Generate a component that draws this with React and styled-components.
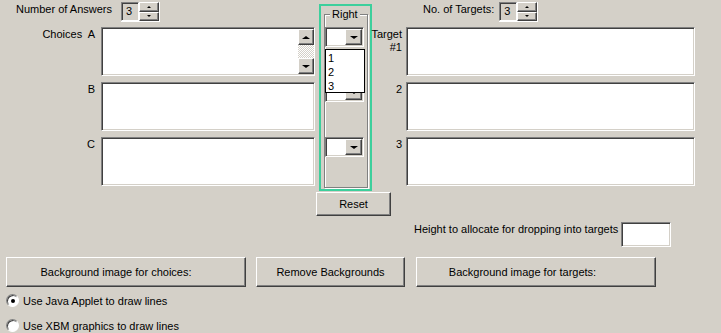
import React from 'react';
import styled, { createGlobalStyle } from 'styled-components';

const GlobalStyle = createGlobalStyle`
  html, body {
    margin: 0;
    padding: 0;
    background: #d4d0c8;
  }
  body {
    font-family: "Liberation Sans", Arial, sans-serif;
    font-size: 11px;
    color: #000;
  }
`;

const raised = `
  background: #d4d0c8;
  border: 1px solid;
  border-color: #fff #404040 #404040 #fff;
  box-shadow: inset -1px -1px #808080;
`;

const sunken = `
  border: 1px solid;
  border-color: #808080 #fff #fff #808080;
  box-shadow: inset 1px 1px #404040, inset -1px -1px #d4d0c8;
`;

const Page = styled.div`
  width: 721px;
  height: 333px;
  overflow: hidden;
  box-sizing: border-box;
`;

const Top = styled.div`
  display: flex;
  align-items: flex-start;
  height: 191px;
`;

const Column = styled.div`
  width: ${p => p.width}px;
  flex-shrink: 0;
  display: flex;
  flex-direction: column;
`;

const Header = styled.div`
  height: 22px;
  display: flex;
  align-items: flex-start;
  padding-left: ${p => p.indent}px;
  gap: ${p => p.gap}px;
  line-height: 13px;
`;

const HeaderText = styled.span`
  padding-top: 3px;
  white-space: nowrap;
`;

const Spinner = styled.div`
  display: flex;
  height: 19px;
  margin-top: 2px;
  border-right: 1px solid #fff;
  border-bottom: 1px solid #fff;
`;

const SpinValue = styled.div`
  ${sunken}
  box-sizing: border-box;
  width: 18px;
  padding: 2px 0 0 4px;
  line-height: 13px;
`;

const SpinButtons = styled.div`
  width: 20px;
  display: flex;
  flex-direction: column;
`;

const SpinBtn = styled.div`
  ${raised}
  flex: 1;
  display: flex;
  align-items: center;
  justify-content: center;
`;

const Tri = styled.span`
  width: 0;
  height: 0;
  border-left: ${p => p.size}px solid transparent;
  border-right: ${p => p.size}px solid transparent;
  ${p => (p.up ? 'border-bottom' : 'border-top')}: ${p => Math.ceil(p.size / 2) + 1}px solid #000;
`;

const Rows = styled.div`
  margin-top: 5px;
  display: flex;
  flex-direction: column;
  gap: 6px;
`;

const Row = styled.div`
  display: flex;
  height: 49px;
`;

const Label = styled.div`
  width: ${p => p.width}px;
  flex-shrink: 0;
  box-sizing: border-box;
  display: flex;
  flex-direction: column;
  align-items: flex-end;
  padding: 1px ${p => p.pad}px 0 0;
  line-height: 13px;
  white-space: pre;
`;

const Field = styled.div`
  ${sunken}
  width: ${p => p.width}px;
  height: 49px;
  box-sizing: border-box;
  background: #fff;
  display: flex;
  justify-content: flex-end;
`;

const ScrollBar = styled.div`
  width: 16px;
  display: flex;
  flex-direction: column;
  padding: 1px 0;
`;

const ScrollBtn = styled.div`
  ${raised}
  box-sizing: border-box;
  height: 16px;
  display: flex;
  align-items: center;
  justify-content: center;
`;

const Track = styled.div`
  flex: 1;
  background: repeating-conic-gradient(#fff 0 25%, #d4d0c8 0 50%) 0 0 / 2px 2px;
`;

const GreenBox = styled.div`
  margin-top: 4px;
  height: 187px;
  box-sizing: border-box;
  border: 2px solid #3ccf9c;
  display: flex;
  flex-direction: column;
`;

const Group = styled.fieldset`
  flex: 1;
  min-width: 0;
  margin: 2px 2px 1px 3px;
  padding: 6px 0 0 0;
  border: 1px solid #808080;
  box-shadow: inset 1px 1px #fff, 1px 1px #fff;
  display: flex;
  flex-direction: column;
  gap: 35px;
`;

const Legend = styled.legend`
  margin-left: 5px;
  padding: 0 2px;
  line-height: 13px;
  background: #d4d0c8;
`;

const Select = styled.div`
  ${sunken}
  position: relative;
  width: 39px;
  height: 20px;
  box-sizing: border-box;
  background: #fff;
  display: flex;
  justify-content: flex-end;
  padding: 1px;
`;

const DropBtn = styled.div`
  ${raised}
  box-sizing: border-box;
  width: 17px;
  height: 16px;
  display: flex;
  align-items: center;
  justify-content: center;
`;

const DropList = styled.div`
  position: absolute;
  top: 21px;
  left: -1px;
  width: 40px;
  height: 44px;
  box-sizing: border-box;
  background: #fff;
  border: 1px solid #000;
  padding: 1px 0 0 2px;
  line-height: 14px;
  z-index: 2;
`;

const Button = styled.div`
  ${raised}
  box-sizing: border-box;
  width: ${p => p.width}px;
  height: ${p => p.height}px;
  margin-left: ${p => p.left || 0}px;
  margin-top: ${p => p.top || 0}px;
  padding-right: ${p => p.shift || 0}px;
  display: flex;
  align-items: center;
  justify-content: center;
  white-space: nowrap;
`;

const HeightRow = styled.div`
  display: flex;
  align-items: flex-start;
  gap: 6px;
  margin: 6px 0 0 414px;
  line-height: 13px;
`;

const HeightText = styled.span`
  width: 201px;
  padding-top: 1px;
  white-space: nowrap;
`;

const SmallInput = styled.div`
  ${sunken}
  width: 50px;
  height: 25px;
  box-sizing: border-box;
  background: #fff;
`;

const ButtonRow = styled.div`
  display: flex;
  margin-top: 10px;
`;

const RadioRow = styled.div`
  display: flex;
  align-items: center;
  gap: 4px;
  height: 13px;
  padding-left: 6px;
  margin-top: ${p => p.top}px;
`;

const Radio = styled.span`
  width: 13px;
  height: 13px;
  box-sizing: border-box;
  border-radius: 50%;
  border: 1px solid;
  border-color: #808080 #fff #fff #808080;
  box-shadow: inset 1px 1px #404040;
  background: #fff;
  display: flex;
  align-items: center;
  justify-content: center;
  &::after {
    content: '';
    width: 4px;
    height: 4px;
    border-radius: 50%;
    background: ${p => (p.checked ? '#000' : 'transparent')};
  }
`;

const choices = [
  { label: ['Choices  A'], scroll: true },
  { label: ['B'] },
  { label: ['C'] },
];

const targets = [['Target', '#1'], ['2'], ['3']];

function NumberSpinner({ value }) {
  return (
    <Spinner>
      <SpinValue>{value}</SpinValue>
      <SpinButtons>
        <SpinBtn><Tri up size={2} /></SpinBtn>
        <SpinBtn><Tri size={2} /></SpinBtn>
      </SpinButtons>
    </Spinner>
  );
}

export default function App() {
  return (
    <Page>
      <GlobalStyle />
      <Top>
        <Column width={319}>
          <Header indent={16} gap={9}>
            <HeaderText>Number of Answers</HeaderText>
            <NumberSpinner value="3" />
          </Header>
          <Rows>
            {choices.map((c, i) => (
              <Row key={i}>
                <Label width={101} pad={6}>
                  {c.label.map(l => <span key={l}>{l}</span>)}
                </Label>
                <Field width={214}>
                  {c.scroll && (
                    <ScrollBar>
                      <ScrollBtn><Tri up size={4} /></ScrollBtn>
                      <Track />
                      <ScrollBtn><Tri size={4} /></ScrollBtn>
                    </ScrollBar>
                  )}
                </Field>
              </Row>
            ))}
          </Rows>
        </Column>
        <Column width={53}>
          <GreenBox>
            <Group>
              <Legend>Right</Legend>
              {[0, 1, 2].map(i => (
                <Select key={i}>
                  <DropBtn><Tri size={4} /></DropBtn>
                  {i === 0 && (
                    <DropList>
                      <div>1</div>
                      <div>2</div>
                      <div>3</div>
                    </DropList>
                  )}
                </Select>
              ))}
            </Group>
          </GreenBox>
        </Column>
        <Column width={330}>
          <Header indent={51} gap={5}>
            <HeaderText>No. of Targets:</HeaderText>
            <NumberSpinner value="3" />
          </Header>
          <Rows>
            {targets.map((t, i) => (
              <Row key={i}>
                <Label width={34} pad={4}>
                  {t.map(l => <span key={l}>{l}</span>)}
                </Label>
                <Field width={289} />
              </Row>
            ))}
          </Rows>
        </Column>
      </Top>
      <Button width={75} height={24} left={316} top={1}>Reset</Button>
      <HeightRow>
        <HeightText>Height to allocate for dropping into targets</HeightText>
        <SmallInput />
      </HeightRow>
      <ButtonRow>
        <Button width={240} height={30} left={6} shift={20}>Background image for choices:</Button>
        <Button width={149} height={30} left={10}>Remove Backgrounds</Button>
        <Button width={240} height={30} left={11} shift={27}>Background image for targets:</Button>
      </ButtonRow>
      <RadioRow top={7}>
        <Radio checked />
        <span>Use Java Applet to draw lines</span>
      </RadioRow>
      <RadioRow top={12}>
        <Radio />
        <span>Use XBM graphics to draw lines</span>
      </RadioRow>
    </Page>
  );
}
